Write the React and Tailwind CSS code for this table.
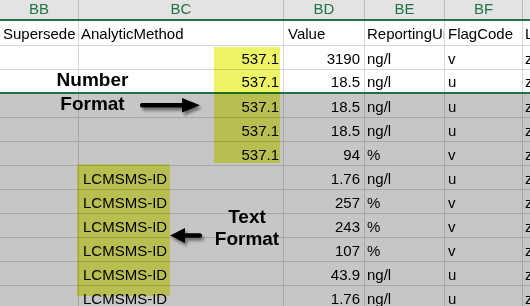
import React from 'react';

const rows = [
  { bc: '537.1', v: '3190', u: 'ng/l', f: 'v' },
  { bc: '537.1', v: '18.5', u: 'ng/l', f: 'u', last: true },
  { bc: '537.1', v: '18.5', u: 'ng/l', f: 'u', gray: true },
  { bc: '537.1', v: '18.5', u: 'ng/l', f: 'u', gray: true },
  { bc: '537.1', v: '94', u: '%', f: 'v', gray: true },
  { bc: 'LCMSMS-ID', text: true, v: '1.76', u: 'ng/l', f: 'u', gray: true },
  { bc: 'LCMSMS-ID', text: true, v: '257', u: '%', f: 'v', gray: true },
  { bc: 'LCMSMS-ID', text: true, v: '243', u: '%', f: 'v', gray: true },
  { bc: 'LCMSMS-ID', text: true, v: '107', u: '%', f: 'v', gray: true },
  { bc: 'LCMSMS-ID', text: true, v: '43.9', u: 'ng/l', f: 'u', gray: true },
  { bc: 'LCMSMS-ID', text: true, v: '1.76', u: 'ng/l', f: 'u', gray: true },
];

function Cell({ w, line, className = '', children }) {
  return (
    <div className={`${w} shrink-0 h-full border-r ${line} flex items-center pt-[3px] overflow-hidden whitespace-nowrap ${className}`}>
      {children}
    </div>
  );
}

function DataRow({ r }) {
  const line = r.gray ? 'border-[#a8a8a8]' : 'border-[#d6d6d6]';
  const bottom = r.last ? 'h-[24px] border-b-2 border-b-[#217346]' : `h-[24px] border-b ${line}`;
  return (
    <div className={`flex ${bottom} ${r.gray ? 'bg-[#c6c6c6]' : 'bg-white'}`}>
      <Cell w="w-[79px]" line={line} />
      <Cell w="w-[205px]" line={line} className={r.text ? 'pl-[4px]' : 'justify-end pr-[4px]'}>{r.bc}</Cell>
      <Cell w="w-[81px]" line={line} className="justify-end pr-[4px]">{r.v}</Cell>
      <Cell w="w-[80px]" line={line} className="pl-[2px]">{r.u}</Cell>
      <Cell w="w-[78px]" line={line} className="pl-[3px]">{r.f}</Cell>
      <Cell w="w-[60px]" line={line} className="pl-[2px]">z</Cell>
    </div>
  );
}

export default function App() {
  const letters = [
    ['BB', 'w-[79px]'],
    ['BC', 'w-[205px]'],
    ['BD', 'w-[81px]'],
    ['BE', 'w-[80px]'],
    ['BF', 'w-[78px]'],
    ['', 'w-[60px]'],
  ];

  return (
    <div className="relative w-[530px] h-[306px] overflow-hidden bg-[#c6c6c6] text-[15px] text-black font-['Liberation_Sans',Arial,sans-serif]">
      {/* column letters */}
      <div className="flex h-[21px] bg-[#e3e3e3] border-b-2 border-[#217346]">
        {letters.map(([l, w], i) => (
          <div key={i} className={`${w} shrink-0 h-full border-r border-[#bdbdbd] flex items-center justify-center text-[#217346]`}>
            {l}
          </div>
        ))}
      </div>

      {/* field names */}
      <div className="flex h-[25px] bg-white border-b border-[#d6d6d6]">
        <Cell w="w-[79px]" line="border-[#d6d6d6]" className="pl-[3px]">Supersede</Cell>
        <Cell w="w-[205px]" line="border-[#d6d6d6]" className="pl-[2px]">AnalyticMethod</Cell>
        <Cell w="w-[81px]" line="border-[#d6d6d6]" className="pl-[4px]">Value</Cell>
        <Cell w="w-[80px]" line="border-[#d6d6d6]" className="pl-[2px]">ReportingUnit</Cell>
        <Cell w="w-[78px]" line="border-[#d6d6d6]" className="pl-[3px]">FlagCode</Cell>
        <Cell w="w-[60px]" line="border-[#d6d6d6]" className="pl-[2px]">Lab</Cell>
      </div>

      {rows.map((r, i) => (
        <DataRow key={i} r={r} />
      ))}

      {/* highlights */}
      <div className="absolute left-[214px] top-[47px] w-[66px] h-[116px] bg-[#edf566] mix-blend-multiply" />
      <div className="absolute left-[77px] top-[164px] w-[93px] h-[132px] bg-[#edf566] mix-blend-multiply" />

      {/* annotations */}
      <div className="absolute left-[40px] top-[68px] w-[105px] text-center font-bold text-[19px] leading-[24px]">
        Number
        <br />
        Format
      </div>
      <div className="absolute left-[197px] top-[206px] w-[100px] text-center font-bold text-[19px] leading-[22px]">
        Text
        <br />
        Format
      </div>

      <svg className="absolute left-[136px] top-[94px]" width="72" height="26" viewBox="0 0 72 26">
        <defs>
          <filter id="sh1" x="-20%" y="-50%" width="140%" height="200%">
            <feDropShadow dx="2" dy="3" stdDeviation="1.5" floodColor="#000" floodOpacity="0.45" />
          </filter>
        </defs>
        <g filter="url(#sh1)">
          <rect x="4" y="9" width="44" height="4.5" rx="2" fill="#000" />
          <polygon points="46,4 64,11.2 46,18.5" fill="#000" />
        </g>
      </svg>

      <svg className="absolute left-[166px] top-[224px]" width="42" height="26" viewBox="0 0 42 26">
        <defs>
          <filter id="sh2" x="-30%" y="-50%" width="160%" height="200%">
            <feDropShadow dx="2" dy="3" stdDeviation="1.5" floodColor="#000" floodOpacity="0.45" />
          </filter>
        </defs>
        <g filter="url(#sh2)">
          <polygon points="4,11.5 19,4 19,19" fill="#000" />
          <rect x="17" y="9.2" width="19" height="4.6" rx="2" fill="#000" />
        </g>
      </svg>
    </div>
  );
}
